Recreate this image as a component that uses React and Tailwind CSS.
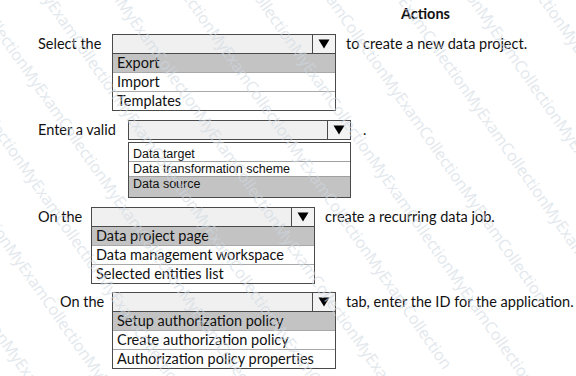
import React from 'react';

const Arrow = () => (
  <svg width="12" height="10" viewBox="0 0 12 10">
    <path d="M0.5 0.5 L11.5 0.5 L6 9.5 Z" fill="#000" />
  </svg>
);

const Dropdown = ({ items, selected, width = 'w-[224px]', arial = false }) => (
  <div className={width}>
    <div className="flex h-[20px] border border-[#4a4a4a] bg-[#f0f0f0]">
      <div className="flex-1" />
      <div className="flex w-[23px] items-center justify-center border-l border-[#4a4a4a] bg-[#f3f3f3]">
        <Arrow />
      </div>
    </div>
    {arial ? (
      <div className="mt-[2px] border border-[#4a4a4a] bg-white pt-[4px] font-['Liberation_Sans',sans-serif] text-[12.5px] leading-[14px]">
        {items.map((it, i) => (
          <div
            key={it}
            className={`px-[4px] ${i === selected ? 'h-[20px] bg-[#c3c3c3]' : 'h-[15px] border-b border-[#a0a0a0]'}`}
          >
            {it}
          </div>
        ))}
      </div>
    ) : (
      <div className="border border-t-0 border-[#4a4a4a] bg-white">
        {items.map((it, i) => (
          <div
            key={it}
            className={`flex items-center px-[4px] ${i < items.length - 1 ? 'h-[19px] border-b border-[#a8a8a8]' : 'h-[18px]'} ${i === selected ? 'bg-[#c3c3c3]' : ''}`}
          >
            {it}
          </div>
        ))}
      </div>
    )}
  </div>
);

const Row = ({ label, labelClass, trail, trailClass, children, className }) => (
  <div className={`flex items-start ${className}`}>
    <div className={`flex h-[20px] items-center ${labelClass}`}>{label}</div>
    {children}
    <div className={`flex h-[20px] items-center ${trailClass}`}>{trail}</div>
  </div>
);

// faint diagonal watermark laid over the whole sheet
const Watermark = () => (
  <div className="pointer-events-none absolute left-[-300px] top-[-300px] flex h-[1000px] w-[1200px] rotate-[55deg] flex-col gap-[38px] font-['Open_Sans',sans-serif] text-[16px] leading-[20px] whitespace-nowrap text-[#cfd9e2] opacity-60">
    {Array.from({ length: 18 }).map((_, i) => (
      <div key={i} className={i % 2 ? 'pl-[60px]' : ''}>
        MyExamCollectionMyExamCollectionMyExamCollectionMyExamCollectionMyExamCollectionMyExamCollection
      </div>
    ))}
  </div>
);

export default function App() {
  return (
    <div className="relative h-[376px] w-[576px] overflow-hidden bg-white font-['Lato',sans-serif] text-[14.5px] text-[#111]">
      <div className="flex justify-end pr-[126px] pt-[3px]">
        <span className="font-bold">Actions</span>
      </div>

      <div className="pl-[38px]">
        <Row label="Select the" labelClass="w-[74px]" trail="to create a new data project." trailClass="ml-[10px]" className="mt-[9px]">
          <Dropdown items={['Export', 'Import', 'Templates']} selected={0} />
        </Row>

        <Row label="Enter a valid" labelClass="w-[90px]" trail="." trailClass="ml-[12px]" className="mt-[9px]">
          <Dropdown items={['Data target', 'Data transformation scheme', 'Data source']} selected={2} width="w-[223px]" arial />
        </Row>

        <Row label="On the" labelClass="w-[53px]" trail="create a recurring data job." trailClass="ml-[10px]" className="mt-[9px]">
          <Dropdown items={['Data project page', 'Data management workspace', 'Selected entities list']} selected={0} />
        </Row>

        <Row label="On the" labelClass="w-[74px] pl-[22px]" trail="tab, enter the ID for the application." trailClass="ml-[10px]" className="mt-[8px]">
          <Dropdown items={['Setup authorization policy', 'Create authorization policy', 'Authorization policy properties']} selected={0} />
        </Row>
      </div>

      <Watermark />
    </div>
  );
}
